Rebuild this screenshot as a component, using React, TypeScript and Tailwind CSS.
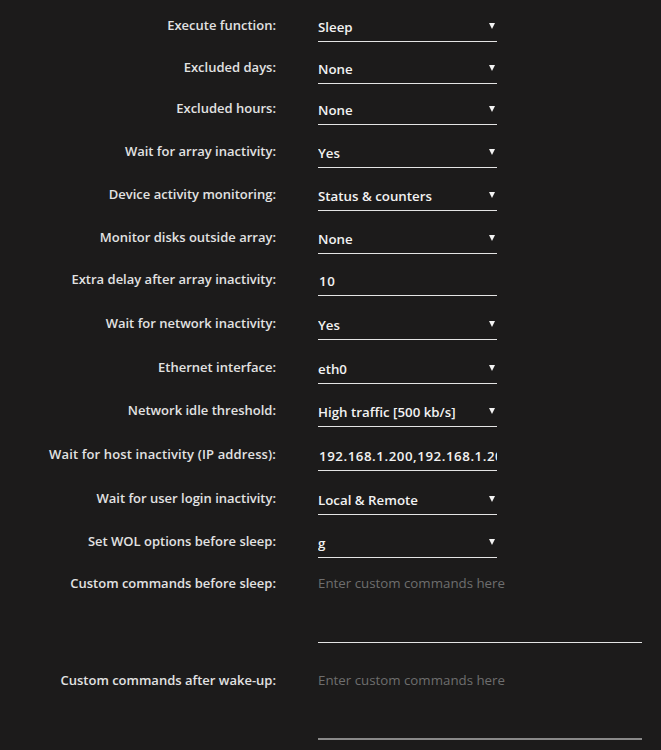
const ROWS: { label: string; value: string; select: boolean; h: string }[] = [
  { label: "Execute function:", value: "Sleep", select: true, h: "h-[42px]" },
  { label: "Excluded days:", value: "None", select: true, h: "h-[41px]" },
  { label: "Excluded hours:", value: "None", select: true, h: "h-[43px]" },
  { label: "Wait for array inactivity:", value: "Yes", select: true, h: "h-[43px]" },
  { label: "Device activity monitoring:", value: "Status & counters", select: true, h: "h-[43px]" },
  { label: "Monitor disks outside array:", value: "None", select: true, h: "h-[42px]" },
  { label: "Extra delay after array inactivity:", value: "10", select: false, h: "h-[44px]" },
  { label: "Wait for network inactivity:", value: "Yes", select: true, h: "h-[44px]" },
  { label: "Ethernet interface:", value: "eth0", select: true, h: "h-[43px]" },
  { label: "Network idle threshold:", value: "High traffic [500 kb/s]", select: true, h: "h-[44px]" },
  { label: "Wait for host inactivity (IP address):", value: "192.168.1.200,192.168.1.201", select: false, h: "h-[44px]" },
  { label: "Wait for user login inactivity:", value: "Local & Remote", select: true, h: "h-[43px]" },
  { label: "Set WOL options before sleep:", value: "g", select: true, h: "h-[43px]" },
];

function Caret() {
  return (
    <svg width="6" height="6" viewBox="0 0 6 6" className="shrink-0 mr-[2px] mb-[1px]">
      <path d="M0 0 H6 L3 6 Z" fill="#f2f2f2" />
    </svg>
  );
}

function Field({ value, select }: { value: string; select: boolean }) {
  return (
    <div className="ml-[42px] w-[179px] h-[30px] border-b border-[#e4e4e4] flex items-center overflow-hidden text-[13.3px]">
      <span className={`flex-1 whitespace-nowrap overflow-hidden leading-[30px] text-[#f2f2f2] pt-[1px] ${select ? "" : "pl-[1px] tracking-[0.55px]"}`}>{value}</span>
      {select && <Caret />}
    </div>
  );
}

function Commands({ label, last }: { label: string; last?: boolean }) {
  return (
    <div className="flex">
      <div className="w-[276px] text-right text-[#e2e2e2] leading-[24px]">{label}</div>
      <div className={`ml-[42px] w-[324px] h-[72px] text-[13.3px] ${last ? "border-b-2 border-[#8a8a8a]" : "border-b border-[#e4e4e4]"}`}>
        <span className="leading-[24px] font-normal text-[#6e6e6e]">Enter custom commands here</span>
      </div>
    </div>
  );
}

export default function App() {
  return (
    <div className="min-h-[750px] w-full bg-[#1c1b1b] text-[13px] font-semibold pt-[12px]" style={{ fontFamily: '"Open Sans", "Noto Sans", sans-serif' }}>
      {ROWS.map(r => (
        <div key={r.label} className={`flex items-start ${r.h}`}>
          <div className={`w-[276px] text-right text-[#e2e2e2] leading-[26px] whitespace-nowrap ${r.label.includes("(") ? "tracking-[0.13px]" : ""}`}>{r.label}</div>
          <Field value={r.value} select={r.select} />
        </div>
      ))}
      <Commands label="Custom commands before sleep:" />
      <div className="h-[25px]" />
      <Commands label="Custom commands after wake-up:" last />
    </div>
  );
}
